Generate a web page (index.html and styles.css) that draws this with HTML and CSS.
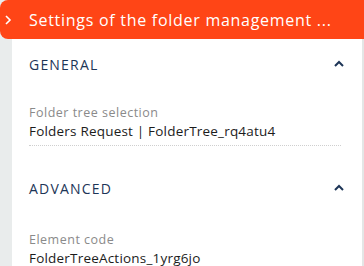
FILE: index.html
```html
<!DOCTYPE html>
<html>
<head>
<meta charset="utf-8">
<link rel="stylesheet" href="styles.css">
</head>
<body>
<div class="app">
  <header class="head">
    <svg class="head-icon" width="10" height="12" viewBox="0 0 10 12"><path d="M3 2l4 4-4 4" fill="none" stroke="#fff" stroke-width="1.6"/></svg>
    <span class="head-title">Settings of the folder management ...</span>
  </header>
  <div class="body">
    <div class="gutter"></div>
    <main class="panel">
      <section class="sect">
        <div class="sect-head">
          <span class="sect-title">GENERAL</span>
          <svg class="caret" width="12" height="8" viewBox="0 0 12 8"><path d="M2 6l4-4 4 4" fill="none" stroke="#1d3557" stroke-width="2"/></svg>
        </div>
        <div class="field">
          <div class="label">Folder tree selection</div>
          <div class="value underline">Folders Request | FolderTree_rq4atu4</div>
        </div>
      </section>
      <section class="sect">
        <div class="sect-head">
          <span class="sect-title">ADVANCED</span>
          <svg class="caret" width="12" height="8" viewBox="0 0 12 8"><path d="M2 6l4-4 4 4" fill="none" stroke="#1d3557" stroke-width="2"/></svg>
        </div>
        <div class="field second">
          <div class="label">Element code</div>
          <div class="value">FolderTreeActions_1yrg6jo</div>
        </div>
      </section>
    </main>
    <div class="edge"></div>
  </div>
</div>
</body>
</html>
```
FILE: styles.css
```css
html, body { margin: 0; padding: 0; }
body {
  width: 364px;
  height: 266px;
  overflow: hidden;
  background: #e9ecec;
  font-family: "Open Sans", "DejaVu Sans", sans-serif;
}
.app { display: flex; flex-direction: column; height: 266px; overflow: hidden; }
.head {
  height: 39px;
  background: #ff4516;
  border-radius: 8px 0 0 8px;
  display: flex;
  align-items: center;
  color: #fff;
  flex: none;
}
.head-icon { margin-left: 3px; margin-right: 16px; }
.head-title { font-size: 16px; white-space: nowrap; letter-spacing: 0.72px; }
.body { display: flex; flex: 1; min-height: 0; }
.gutter { width: 12px; background: #e9ecec; }
.panel { width: 350px; background: #fff; padding: 0 17px; box-sizing: border-box; }
.edge { width: 2px; background: #e4e6e6; }
.sect-head {
  height: 50px;
  display: flex;
  align-items: center;
  justify-content: space-between;
}
.sect-title { font-size: 14px; color: #1d3557; letter-spacing: 1.2px; }
.field { padding-top: 15px; padding-bottom: 17px; }
.field.second { padding-top: 18px; }
.label { font-size: 12.5px; color: #8a8a8a; line-height: 18px; letter-spacing: 0.5px; }
.value { font-size: 13.5px; color: #1c1c1c; line-height: 19px; letter-spacing: 0.2px; }
.underline { border-bottom: 1px dotted #cfcfcf; padding-bottom: 4px; margin-right: 4px; }
```
